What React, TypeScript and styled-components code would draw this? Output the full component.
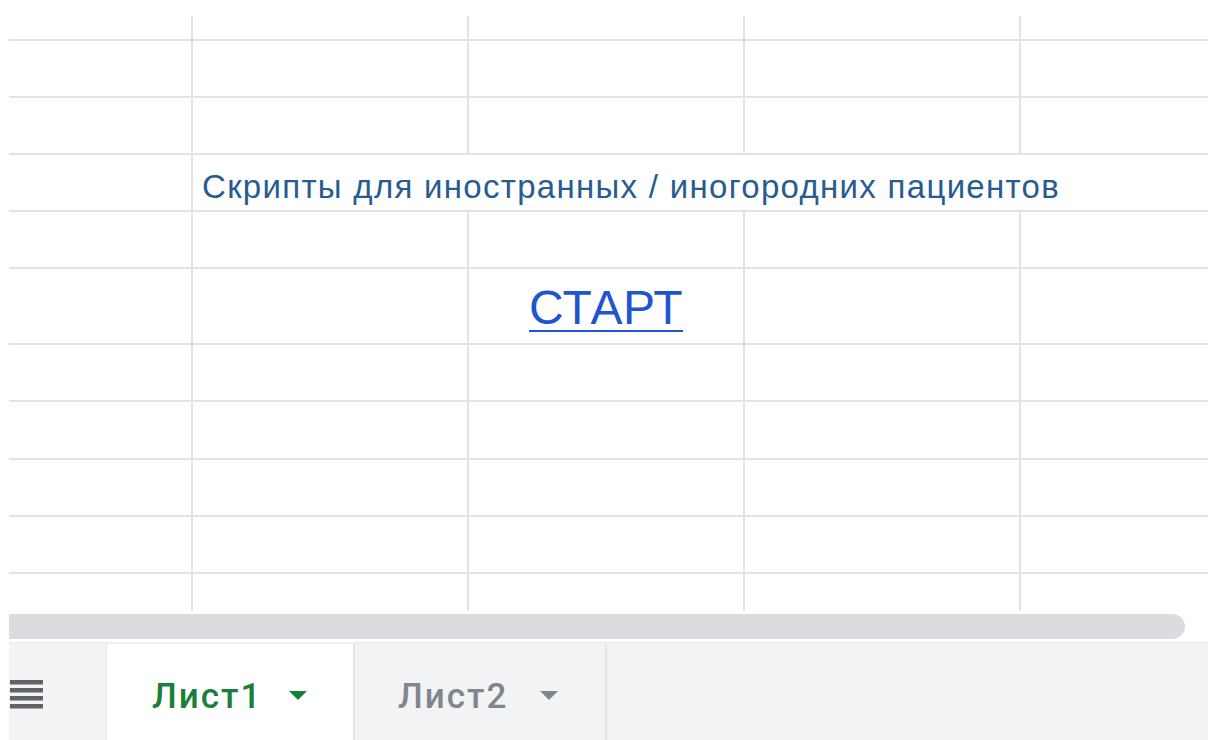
import React from "react";
import styled, { createGlobalStyle } from "styled-components";

const GlobalStyle = createGlobalStyle`
  html, body {
    margin: 0;
    padding: 0;
    background: #ffffff;
  }
  body {
    font-family: "Liberation Sans", Arial, sans-serif;
  }
`;

const ROW_HEIGHTS = [25, 57, 57, 57, 57, 76, 57, 58, 57, 57];
const COLUMN_WIDTHS = [184, 276, 276, 276];
const TITLE_ROW = 3;
const START_ROW = 5;

const Page = styled.div`
  width: 1208px;
  height: 740px;
  box-sizing: border-box;
  padding: 16px 0 0 9px;
  display: flex;
  flex-direction: column;
  overflow: hidden;
  background: #ffffff;
`;

const Grid = styled.div`
  flex: 0 0 595px;
  display: grid;
  grid-template-columns: ${COLUMN_WIDTHS.map((w) => `${w}px`).join(" ")} 1fr;
  grid-template-rows: ${ROW_HEIGHTS.map((h) => `${h}px`).join(" ")} 1fr;
`;

const Cell = styled.div<{ $lastCol?: boolean; $lastRow?: boolean; $span?: number }>`
  box-sizing: border-box;
  min-width: 0;
  border-right: ${(p) => (p.$lastCol ? "none" : "2px solid #e3e3e3")};
  border-bottom: ${(p) => (p.$lastRow ? "none" : "2px solid #e3e3e3")};
  grid-column: ${(p) => (p.$span ? `span ${p.$span}` : "auto")};
`;

const TitleCell = styled(Cell)`
  display: flex;
  align-items: flex-end;
  padding: 0 0 7px 9px;
  white-space: nowrap;
  font-size: 33px;
  line-height: 1;
  letter-spacing: 1.3px;
  color: #285c91;
`;

const LinkCell = styled(Cell)`
  display: flex;
  align-items: flex-end;
  justify-content: center;
  padding-bottom: 11px;
`;

const StartLink = styled.a`
  font-size: 48px;
  line-height: 1;
  letter-spacing: 0.4px;
  color: #1f55cf;
  text-decoration: underline;
  text-decoration-thickness: 2px;
  text-underline-offset: 6px;
  cursor: pointer;
`;

const ScrollTrack = styled.div`
  flex: 0 0 31px;
  box-sizing: border-box;
  padding: 3px 23px 3px 0;
`;

const ScrollThumb = styled.div`
  height: 25px;
  background: #dadce0;
  border-radius: 0 13px 13px 0;
`;

const TabBar = styled.div`
  flex: 1;
  display: flex;
  background: #f1f3f4;
  border-top: 1px solid #e8eaed;
`;

const MenuButton = styled.div`
  width: 97px;
  box-sizing: border-box;
  padding: 37px 0 0 1px;
`;

const Tab = styled.div<{ $active?: boolean; $width: number; $pad: number }>`
  width: ${(p) => p.$width}px;
  box-sizing: border-box;
  margin-top: 1px;
  padding: 35px 0 0 ${(p) => p.$pad}px;
  display: flex;
  align-items: flex-start;
  gap: ${(p) => (p.$active ? 26 : 31)}px;
  background: ${(p) => (p.$active ? "#ffffff" : "#f1f3f4")};
  border-left: ${(p) => (p.$active ? "1px solid #e6e6e6" : "none")};
  border-right: 2px solid #e3e5e8;
  font-family: Roboto, "Liberation Sans", sans-serif;
  font-weight: 500;
  font-size: 35px;
  line-height: 1;
  color: ${(p) => (p.$active ? "#188038" : "#80868b")};
`;

const TabLabel = styled.span`
  letter-spacing: 2px;
`;

const Caret = styled.svg`
  margin-top: 12px;
  flex: none;
`;

const MenuIcon = () => (
  <svg width="34" height="29" viewBox="0 0 34 29">
    {[0, 8, 16, 24].map((y) => (
      <rect key={y} x="0" y={y} width="33" height="4.5" fill="#5f6368" />
    ))}
  </svg>
);

const TabCaret = ({ color }: { color: string }) => (
  <Caret width="20" height="9" viewBox="0 0 20 9">
    <path d="M1 0 L19 0 L10 9 Z" fill={color} />
  </Caret>
);

export default function App() {
  const rows = ROW_HEIGHTS.length + 1;
  const cols = COLUMN_WIDTHS.length + 1;

  const cells: React.ReactNode[] = [];
  for (let r = 0; r < rows; r++) {
    const lastRow = r === rows - 1;
    for (let c = 0; c < cols; c++) {
      const lastCol = c === cols - 1;
      if (r === TITLE_ROW && c === 1) {
        cells.push(
          <TitleCell key={`${r}-${c}`} $span={4} $lastCol>
            Скрипты для иностранных / иногородних пациентов
          </TitleCell>
        );
        continue;
      }
      if (r === TITLE_ROW && c > 1) continue;
      if (r === START_ROW && c === 2) {
        cells.push(
          <LinkCell key={`${r}-${c}`}>
            <StartLink>СТАРТ</StartLink>
          </LinkCell>
        );
        continue;
      }
      cells.push(<Cell key={`${r}-${c}`} $lastCol={lastCol} $lastRow={lastRow} />);
    }
  }

  return (
    <>
      <GlobalStyle />
      <Page>
        <Grid>{cells}</Grid>
        <ScrollTrack>
          <ScrollThumb />
        </ScrollTrack>
        <TabBar>
          <MenuButton>
            <MenuIcon />
          </MenuButton>
          <Tab $active $width={249} $pad={45}>
            <TabLabel>Лист1</TabLabel>
            <TabCaret color="#188038" />
          </Tab>
          <Tab $width={252} $pad={43}>
            <TabLabel>Лист2</TabLabel>
            <TabCaret color="#80868b" />
          </Tab>
        </TabBar>
      </Page>
    </>
  );
}
